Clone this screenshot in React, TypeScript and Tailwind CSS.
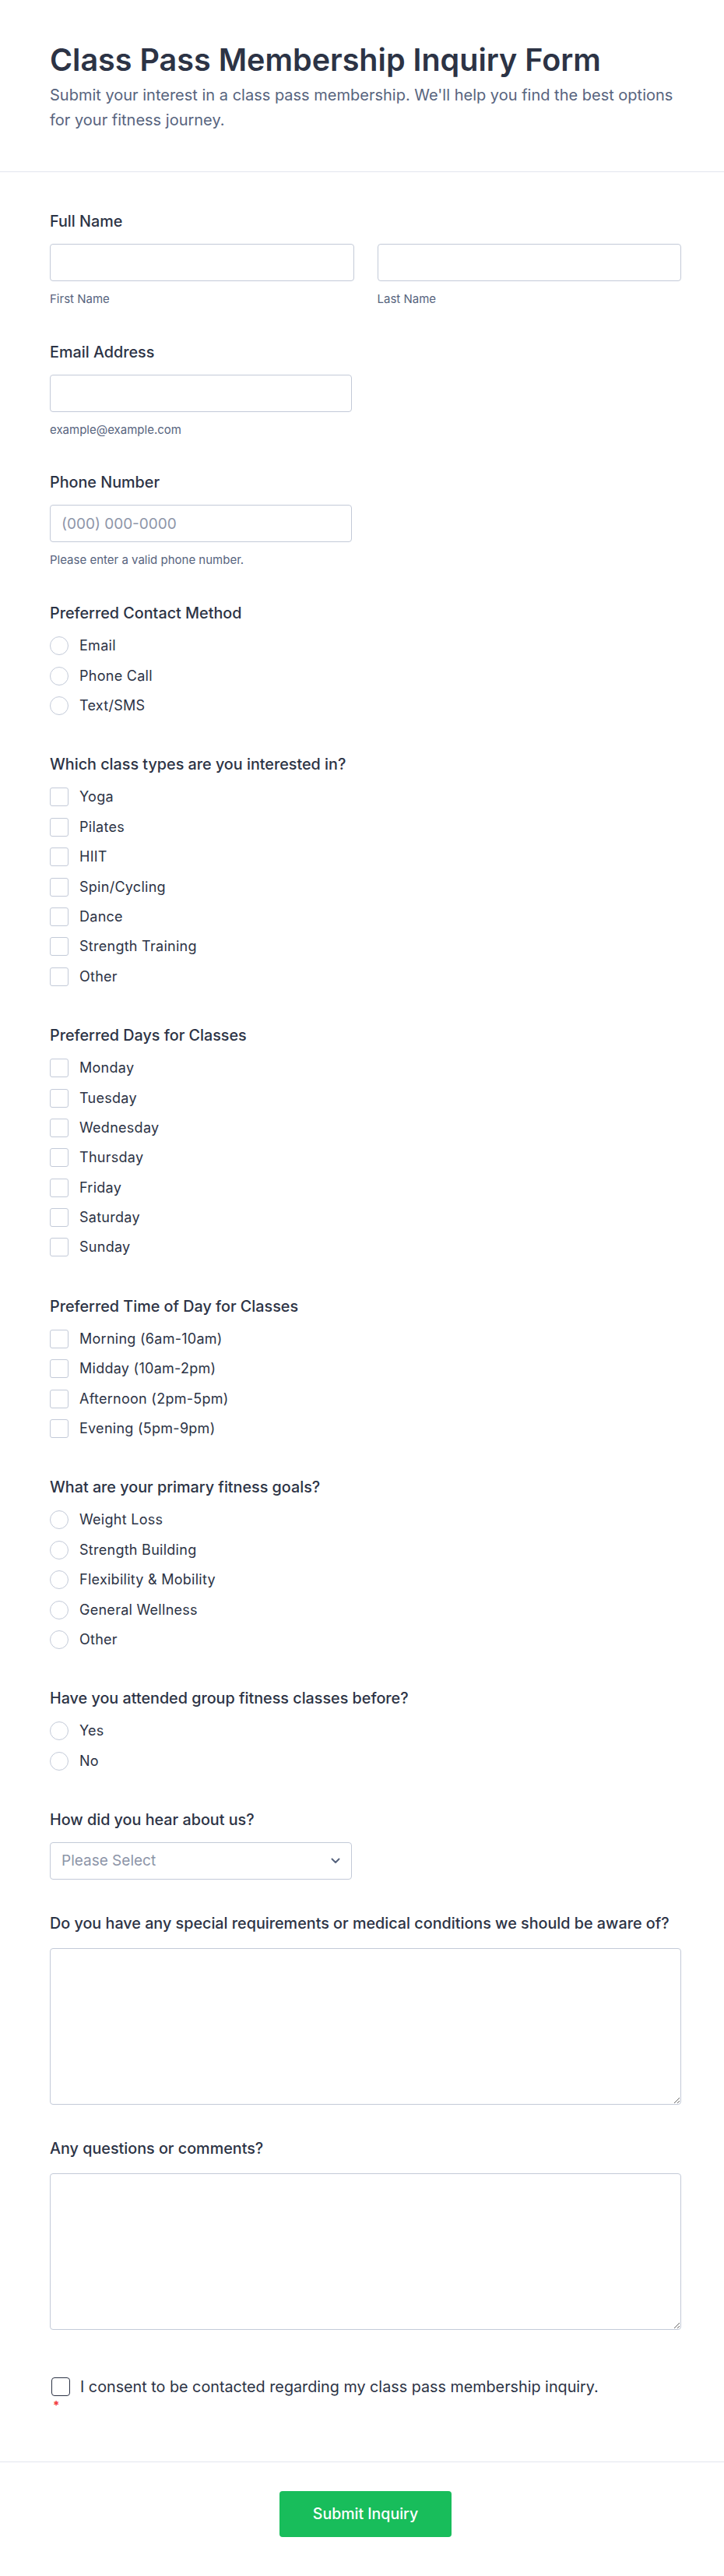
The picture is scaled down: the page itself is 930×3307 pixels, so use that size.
import React from "react";

const CONTACT_METHODS = ["Email", "Phone Call", "Text/SMS"];
const CLASS_TYPES = [
  "Yoga",
  "Pilates",
  "HIIT",
  "Spin/Cycling",
  "Dance",
  "Strength Training",
  "Other",
];
const DAYS = [
  "Monday",
  "Tuesday",
  "Wednesday",
  "Thursday",
  "Friday",
  "Saturday",
  "Sunday",
];
const TIMES = [
  "Morning (6am-10am)",
  "Midday (10am-2pm)",
  "Afternoon (2pm-5pm)",
  "Evening (5pm-9pm)",
];
const GOALS = [
  "Weight Loss",
  "Strength Building",
  "Flexibility & Mobility",
  "General Wellness",
  "Other",
];
const ATTENDED = ["Yes", "No"];

function FieldLabel({
  children,
  className = "mb-[17px]",
}: {
  children: React.ReactNode;
  className?: string;
}) {
  return (
    <div
      className={`text-[19.75px] font-medium leading-6 text-[#2c3345] ${className}`}
    >
      {children}
    </div>
  );
}

function SubLabel({ children }: { children: React.ReactNode }) {
  return (
    <div className="mt-3 text-[15px] leading-[22.67px] text-[#57647e]">
      {children}
    </div>
  );
}

function TextInput({
  placeholder,
  className = "",
}: {
  placeholder?: string;
  className?: string;
}) {
  return (
    <input
      type="text"
      placeholder={placeholder}
      className={`h-12 rounded border border-[#c3cad8] bg-white px-[14px] text-[19px] text-[#2c3345] outline-none placeholder:text-[#8d95a8] ${className}`}
    />
  );
}

function ChoiceGroup({
  label,
  options,
  type,
}: {
  label: string;
  options: string[];
  type: "radio" | "checkbox";
}) {
  return (
    <div>
      <FieldLabel className="mb-[11px]">{label}</FieldLabel>
      <div className="flex flex-col">
        {options.map((option) => (
          <label
            key={option}
            className="flex h-[38.4px] items-center gap-3.5 text-[18px] leading-6 tracking-[0.015em] text-[#2c3345]"
          >
            <span
              className={`size-6 shrink-0 border border-[#c3cad8] bg-white ${
                type === "radio" ? "rounded-full" : "rounded-[3px]"
              }`}
            />
            {option}
          </label>
        ))}
      </div>
    </div>
  );
}

export default function App() {
  return (
    <div className="min-h-[3307px] w-full border-b border-[#e3e5ee] bg-white font-['Inter',sans-serif] text-[#2c3345]">
      <header className="border-b border-[#e3e5ee] pb-[50px] pl-16 pr-[55px] pt-[53px]">
        <h1 className="text-[39.5px] font-semibold leading-[48px] text-[#2c3345]">
          Class Pass Membership Inquiry Form
        </h1>
        <p className="mt-[5px] text-[20px] leading-8 text-[#57647e]">
          Submit your interest in a class pass membership. We'll help you find
          the best options for your fitness journey.
        </p>
      </header>

      <form className="flex flex-col gap-11 pb-16 pl-16 pr-[55px] pt-[51px]">
        <div>
          <FieldLabel>Full Name</FieldLabel>
          <div className="grid grid-cols-2 gap-[30px]">
            <div className="flex flex-col">
              <TextInput className="w-full" />
              <SubLabel>First Name</SubLabel>
            </div>
            <div className="flex flex-col">
              <TextInput className="w-full" />
              <SubLabel>Last Name</SubLabel>
            </div>
          </div>
        </div>

        <div className="flex flex-col">
          <FieldLabel>Email Address</FieldLabel>
          <TextInput className="w-[388px]" />
          <SubLabel>example@example.com</SubLabel>
        </div>

        <div className="flex flex-col">
          <FieldLabel>Phone Number</FieldLabel>
          <TextInput className="w-[388px]" placeholder="(000) 000-0000" />
          <SubLabel>Please enter a valid phone number.</SubLabel>
        </div>

        <ChoiceGroup
          label="Preferred Contact Method"
          options={CONTACT_METHODS}
          type="radio"
        />
        <ChoiceGroup
          label="Which class types are you interested in?"
          options={CLASS_TYPES}
          type="checkbox"
        />
        <ChoiceGroup
          label="Preferred Days for Classes"
          options={DAYS}
          type="checkbox"
        />
        <ChoiceGroup
          label="Preferred Time of Day for Classes"
          options={TIMES}
          type="checkbox"
        />
        <ChoiceGroup
          label="What are your primary fitness goals?"
          options={GOALS}
          type="radio"
        />
        <ChoiceGroup
          label="Have you attended group fitness classes before?"
          options={ATTENDED}
          type="radio"
        />

        <div>
          <FieldLabel>How did you hear about us?</FieldLabel>
          <div className="flex h-12 w-[388px] items-center justify-between rounded border border-[#c3cad8] bg-white pl-[14px] pr-[14px]">
            <span className="text-[19px] text-[#8d95a8]">Please Select</span>
            <svg
              width="12"
              height="8"
              viewBox="0 0 12 8"
              fill="none"
              stroke="#57647e"
              strokeWidth="2"
              strokeLinecap="round"
              strokeLinejoin="round"
            >
              <path d="M1.5 1.5 6 6l4.5-4.5" />
            </svg>
          </div>
        </div>

        <div>
          <FieldLabel className="mb-5">
            Do you have any special requirements or medical conditions we
            should be aware of?
          </FieldLabel>
          <textarea className="block h-[201px] w-full rounded border border-[#c3cad8] bg-white outline-none" />
        </div>

        <div>
          <FieldLabel className="mb-5">Any questions or comments?</FieldLabel>
          <textarea className="block h-[201px] w-full rounded border border-[#c3cad8] bg-white outline-none" />
        </div>

        <div className="pt-[17px]">
          <label className="flex h-6 items-center gap-[13px] pl-0.5 text-[19.75px] leading-6 text-[#2c3345]">
            <span className="size-6 shrink-0 rounded border-[1.5px] border-[#2c3345] bg-white" />
            I consent to be contacted regarding my class pass membership
            inquiry.
          </label>
          <div className="mt-1 h-4 pl-1 text-[15px] font-bold leading-4 text-[#f23a3c]">
            *
          </div>
        </div>
      </form>

      <footer className="flex justify-center border-t border-[#e3e5ee] pb-[50px] pl-16 pr-[55px] pt-[37px]">
        <button
          type="button"
          className="h-[59px] w-[221px] rounded bg-[#18bd5b] text-[19.5px] font-medium text-white"
        >
          Submit Inquiry
        </button>
      </footer>
    </div>
  );
}
